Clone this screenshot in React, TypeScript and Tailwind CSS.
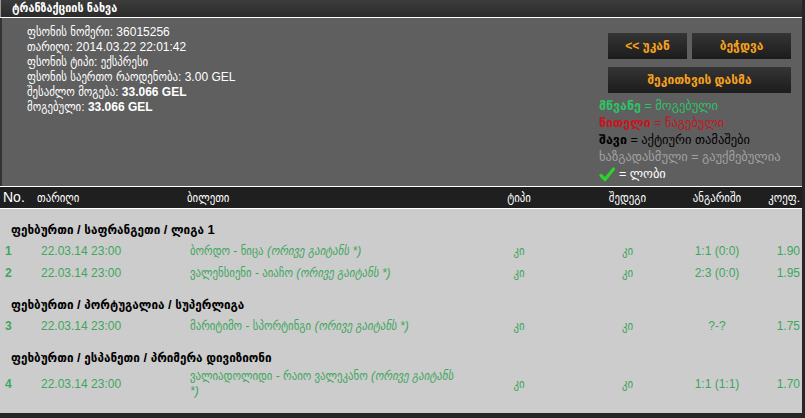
import React from 'react';

type Row = { no: number; date: string; match: string; bet: string; type: string; result: string; score: string; coef: string };
type Group = { title: string; rows: Row[] };

const groups: Group[] = [
  {
    title: 'ფეხბურთი / საფრანგეთი / ლიგა 1',
    rows: [
      { no: 1, date: '22.03.14 23:00', match: 'ბორდო - ნიცა', bet: '(ორივე გაიტანს *)', type: 'კი', result: 'კი', score: '1:1 (0:0)', coef: '1.90' },
      { no: 2, date: '22.03.14 23:00', match: 'ვალენსიენი - აიაჩო', bet: '(ორივე გაიტანს *)', type: 'კი', result: 'კი', score: '2:3 (0:0)', coef: '1.95' },
    ],
  },
  {
    title: 'ფეხბურთი / პორტუგალია / სუპერლიგა',
    rows: [
      { no: 3, date: '22.03.14 23:00', match: 'მარიტიმო - სპორტინგი', bet: '(ორივე გაიტანს *)', type: 'კი', result: 'კი', score: '?-?', coef: '1.75' },
    ],
  },
  {
    title: 'ფეხბურთი / ესპანეთი / პრიმერა დივიზიონი',
    rows: [
      { no: 4, date: '22.03.14 23:00', match: 'ვალიადოლიდი - რაიო ვალეკანო', bet: '(ორივე გაიტანს *)', type: 'კი', result: 'კი', score: '1:1 (1:1)', coef: '1.70' },
    ],
  },
];

const font = "font-['Liberation_Sans','DejaVu_Sans_Condensed','DejaVu_Sans',sans-serif]";
const wide = "font-['Liberation_Sans','DejaVu_Sans',sans-serif]";

const Button: React.FC<{ label: string; className?: string }> = ({ label, className }) => (
  <button className={`h-[26px] bg-gradient-to-b from-[#353535] to-[#1c1c1c] text-[12px] font-bold text-[#f7a21c] ${wide} ${className ?? ''}`}>
    {label}
  </button>
);

const App: React.FC = () => {
  return (
    <div className={`w-[805px] h-[418px] overflow-hidden bg-[#262626] ${font}`}>
      <div className="w-[802px]">
        {/* header */}
        <div className="h-[17px] bg-gradient-to-b from-[#3c3c3c] to-[#2b2b2b] border-l border-[#9a9a9a] pl-[11px] text-[12px] font-bold leading-[17px] text-white">
          ტრანზაქციის ნახვა
        </div>
        <div className="h-px bg-white" />

        {/* info panel */}
        <div className="h-[168px] bg-[#5f5f5f] border-l-2 border-[#333] flex justify-between">
          <div className="pl-[25px] pt-[7px] text-[12px] leading-[15px] text-white">
            <div>ფსონის ნომერი: 36015256</div>
            <div>თარიღი: 2014.03.22 22:01:42</div>
            <div>ფსონის ტიპი: ექსპრესი</div>
            <div>ფსონის საერთო რაოდენობა: 3.00 GEL</div>
            <div>შესაძლო მოგება: <b>33.066 GEL</b></div>
            <div>მოგებული: <b>33.066 GEL</b></div>
          </div>
          <div className="w-[204px] pt-[15px] flex flex-col">
            <div className="flex gap-[5px] pl-[10px]">
              <Button label="<< უკან" className="w-[79px]" />
              <Button label="ბეჭდვა" className="w-[99px]" />
            </div>
            <Button label="შეკითხვის დასმა" className="ml-[10px] mt-[8px] w-[183px]" />
            <div className={`mt-[5px] pl-[1px] text-[12.5px] leading-[17px] ${wide}`}>
              <div className="text-[#2fc266]"><b>მწვანე</b> = მოგებული</div>
              <div className="text-[#c8141c]"><b>წითელი</b> = წაგებული</div>
              <div className="text-black"><b>შავი</b> = აქტიური თამაშები</div>
              <div className="text-[#a2a2a2]">ხაზგადასმული = გაუქმებულია</div>
              <div className="flex items-center gap-[4px] text-white">
                <svg width="16" height="15" viewBox="0 0 16 15" className="shrink-0">
                  <path d="M2 8.5 L6 12.5 L14.5 2" fill="none" stroke="#2bd22b" strokeWidth="3.2" strokeLinecap="round" strokeLinejoin="round" />
                </svg>
                <span>= ლობი</span>
              </div>
            </div>
          </div>
        </div>
        <div className="h-px bg-white" />

        {/* table */}
        <table className="w-[802px] table-fixed border-collapse">
          <colgroup>
            <col className="w-[35px]" />
            <col className="w-[151px]" />
            <col className="w-[279px]" />
            <col className="w-[108px]" />
            <col className="w-[109px]" />
            <col className="w-[70px]" />
            <col className="w-[50px]" />
          </colgroup>
          <thead>
            <tr className="h-[18px] bg-[#1f1f1f] text-white text-[12px] font-normal">
              <th className="pl-[3px] text-left font-normal text-[14px]">No.</th>
              <th className="pl-[2px] text-left font-normal">თარიღი</th>
              <th className="pl-[1px] text-left font-normal">ბილეთი</th>
              <th className="font-normal">ტიპი</th>
              <th className="font-normal">შედეგი</th>
              <th className="font-normal">ანგარიში</th>
              <th className="pr-[2px] text-right font-normal">კოეფ.</th>
            </tr>
            <tr><td colSpan={7} className="h-px p-0 bg-white" /></tr>
          </thead>
          <tbody className="bg-[#cccccc] text-[12px] text-[#3ea65e]">
            {groups.map((g) => (
              <React.Fragment key={g.title}>
                <tr className="h-[31px]">
                  <td colSpan={7} className="pl-[11px] pt-[12px] align-top text-[13px] font-bold leading-[17px] text-black">
                    {g.title}
                  </td>
                </tr>
                {g.rows.map((r) => (
                  <tr key={r.no} className={r.no === 4 ? 'h-[32px]' : 'h-[22px]'}>
                    <td className="pl-[5px] font-bold">{r.no}</td>
                    <td className="pl-[6px]">{r.date}</td>
                    <td className="pl-[4px] pr-[6px] leading-[15px]">
                      {r.match}{' '}
                      {r.bet.split(' ').map((w, i) => (
                        <React.Fragment key={i}>
                          {i > 0 && ' '}
                          <i>{w}</i>
                        </React.Fragment>
                      ))}
                    </td>
                    <td className="text-center">{r.type}</td>
                    <td className="text-center">{r.result}</td>
                    <td className="text-center">{r.score}</td>
                    <td className="pr-[2px] text-right">{r.coef}</td>
                  </tr>
                ))}
              </React.Fragment>
            ))}
            <tr className="h-[13px]"><td colSpan={7} /></tr>
          </tbody>
        </table>
      </div>
    </div>
  );
};

export default App;
